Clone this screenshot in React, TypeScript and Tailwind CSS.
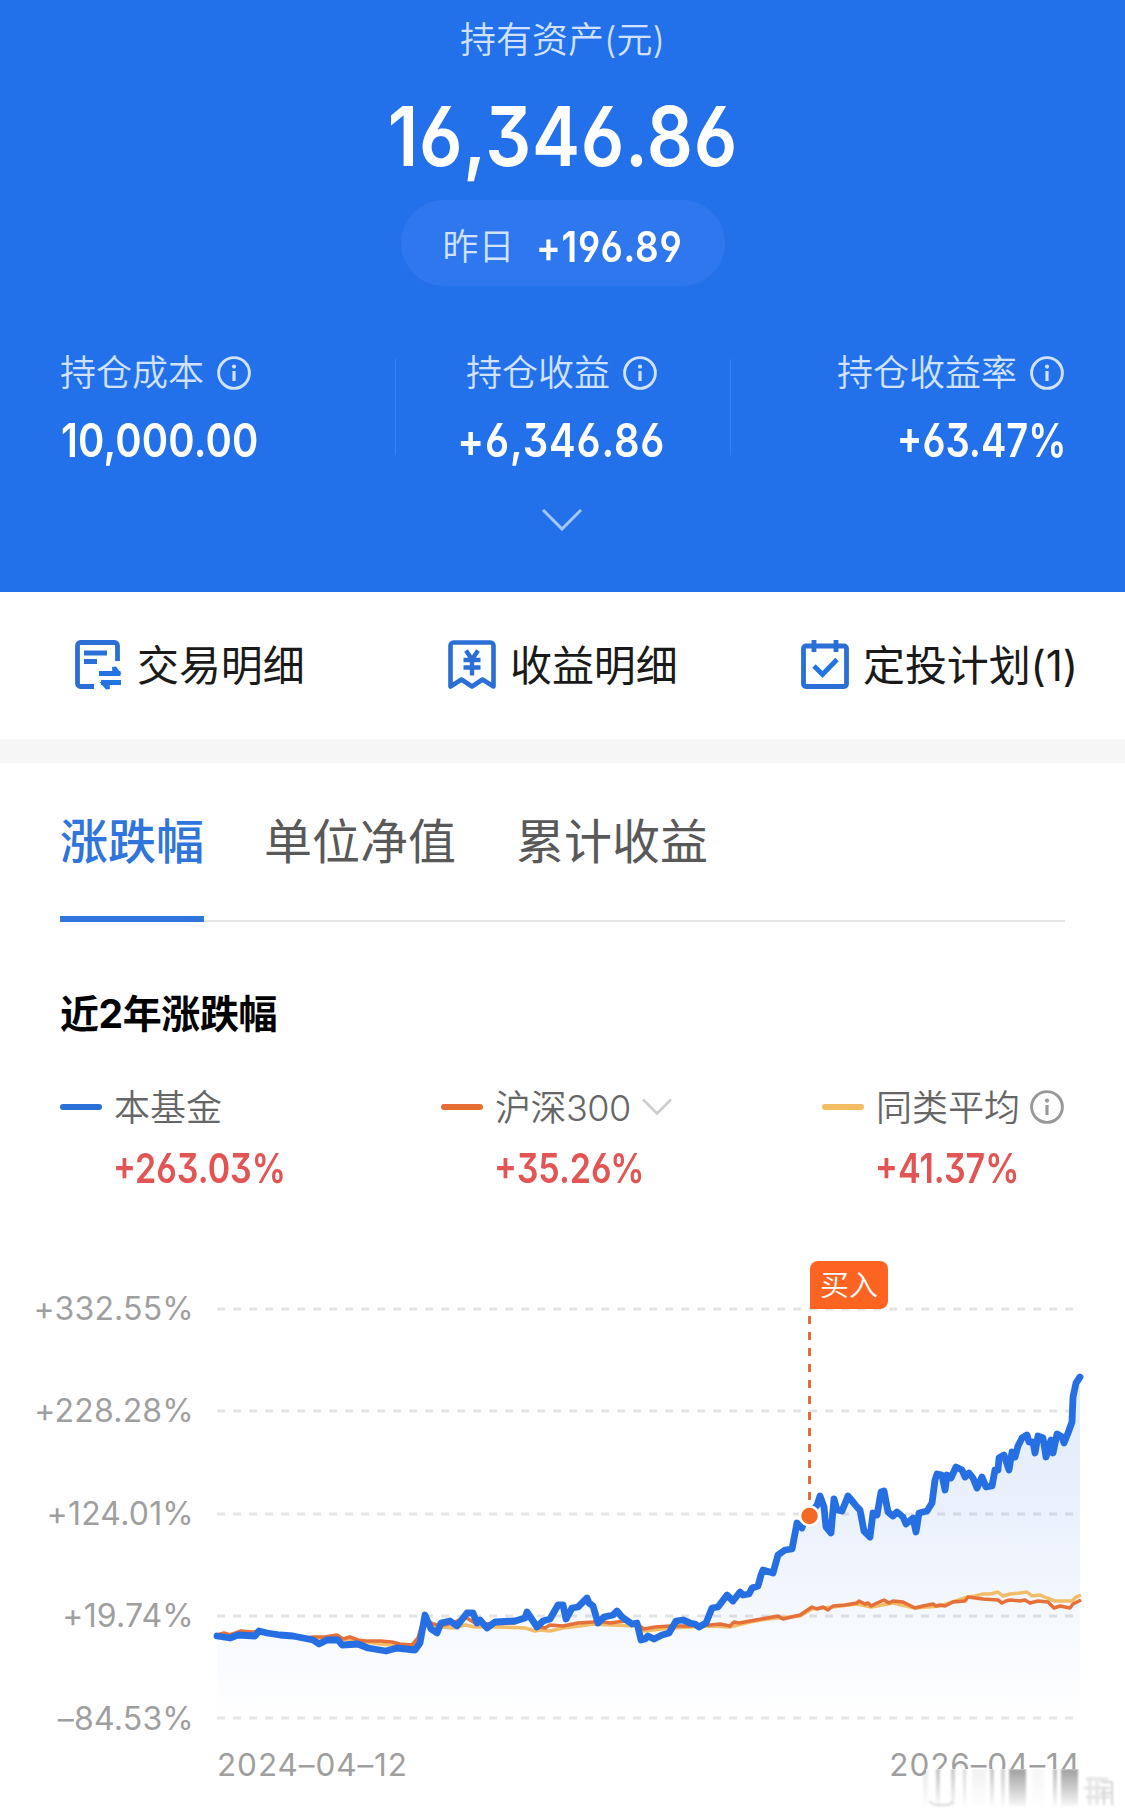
import React from 'react';
import { clsx } from 'clsx';

const ACTIONS = [
  { id: 'trade', label: '交易明细', Icon: TradeIcon, width: 'w-[373px]' },
  { id: 'profit', label: '收益明细', Icon: ProfitIcon, width: 'w-[353px]' },
  { id: 'plan', label: '定投计划(1)', Icon: PlanIcon, width: 'w-[290px]' },
];

const TABS = ['涨跌幅', '单位净值', '累计收益'];

const Y_LABELS = ['+332.55%', '+228.28%', '+124.01%', '+19.74%', '–84.53%'];
const GRID_Y = [69, 171, 274, 376, 478];

// x,y pairs in plot coordinates
const FUND =
  '17,396 30,398 38,395 55,396 59,391 67,393 80,395 93,396 113,400 119,404 127,400 138,400 142,405 158,404 168,408 186,411 197,408 215,410 220,403 225,375 231,389 237,393 241,383 250,381 257,386 267,373 273,373 277,383 280,380 287,388 295,382 315,381 325,378 327,372 337,387 343,381 350,379 358,365 363,365 366,379 372,368 378,367 382,363 387,358 389,363 393,366 398,383 404,377 413,375 417,371 422,377 432,384 437,383 441,400 445,399 448,396 454,399 462,395 469,393 476,381 483,380 490,383 495,384 499,387 506,383 512,368 518,367 527,355 533,361 540,352 543,355 549,354 552,348 558,346 561,335 563,330 573,333 578,315 585,310 592,309 597,283 602,288 604,282 609,276 617,265 620,256 624,267 626,287 631,293 634,259 637,270 642,271 648,256 653,262 657,267 660,270 664,291 670,297 673,273 677,275 681,252 684,251 688,272 693,276 697,272 703,277 706,284 713,278 716,292 719,273 727,271 732,263 735,240 737,234 742,235 745,250 747,235 751,238 756,227 762,230 765,237 769,233 773,238 777,248 782,237 786,247 792,246 795,230 798,230 799,218 804,215 809,230 812,212 815,217 818,206 822,198 827,195 829,202 833,202 835,213 838,196 843,198 846,217 851,200 853,213 857,194 862,197 864,203 868,193 872,182 873,157 876,143 880,137';

const INDEX =
  '17,395 24,393 30,395 41,391 52,392 60,391 80,394 93,395 104,398 113,397 125,397 137,395 143,399 150,397 158,400 165,401 180,401 192,402 200,404 212,405 218,398 225,374 229,382 234,384 240,386 253,383 265,377 275,383 290,384 315,383 329,377 335,386 345,388 350,385 363,386 378,383 393,382 398,381 410,383 425,381 438,385 444,389 455,387 470,386 490,386 510,385 520,384 530,386 534,382 539,383 550,381 567,378 578,376 583,379 600,375 612,367 617,369 623,367 628,370 633,366 645,365 657,363 659,361 665,364 668,363 671,366 677,363 684,360 689,363 693,361 703,362 715,368 723,366 733,364 736,366 740,365 745,366 753,362 765,361 768,357 783,359 798,360 802,363 806,361 810,360 820,361 825,360 830,363 838,361 848,362 854,368 860,366 870,368 873,364 881,360';

const AVERAGE =
  '17,396 41,393 60,393 93,397 113,399 137,398 150,400 180,404 200,406 212,407 218,400 225,377 234,386 240,387 253,388 265,385 275,387 300,387 325,388 335,391 340,390 350,391 363,388 380,386 393,384 410,385 438,386 444,391 470,388 510,386 530,387 550,382 567,379 600,376 612,369 633,367 657,364 671,367 693,363 715,368 740,366 768,357 775,356 783,354 790,354 798,352 803,356 810,354 820,353 827,352 832,356 840,355 847,358 855,361 872,361 876,357 881,355';

function InfoIcon({ className }: { className?: string }) {
  return (
    <svg viewBox="0 0 34 34" fill="none" className={clsx('w-[34px] h-[34px] shrink-0', className)}>
      <circle cx="17" cy="17" r="15.4" stroke="currentColor" strokeWidth="2.9" />
      <circle cx="17" cy="10.6" r="2.1" fill="currentColor" />
      <path d="M17 15v10" stroke="currentColor" strokeWidth="3.2" />
    </svg>
  );
}

function TradeIcon() {
  return (
    <svg viewBox="0 0 48 50" fill="none" className="w-12 h-[50px] shrink-0">
      <path d="M19 46.5H5.5a3 3 0 0 1-3-3v-38a3 3 0 0 1 3-3h34a3 3 0 0 1 3 3V21" stroke="#2b6fd6" strokeWidth="4.8" />
      <path d="M9 13h23M9 21.5h13" stroke="#2b6fd6" strokeWidth="4.8" />
      <path d="M24 33.5h21.5M46 42.5H26" stroke="#2274e5" strokeWidth="4.8" />
      <path d="M37 27l4-0.5 5.5 7.5h-9zM35 49l-4 0.5-6.5-7.5h10z" fill="#2274e5" />
    </svg>
  );
}

function ProfitIcon() {
  return (
    <svg viewBox="0 0 48 50" fill="none" className="w-12 h-[50px] shrink-0">
      <path
        d="M2.5 46.5v-41a3 3 0 0 1 3-3h37a3 3 0 0 1 3 3v41L34.5 39.5 24 46.5 13.5 39.5z"
        stroke="#2b6fd6"
        strokeWidth="4.6"
        strokeLinejoin="round"
      />
      <path d="M18 10.5l6 9 6-9M15.5 20h17M15.5 27.5h17M24 19v16.5" stroke="#2b6fd6" strokeWidth="4.4" />
    </svg>
  );
}

function PlanIcon() {
  return (
    <svg viewBox="0 0 48 50" fill="none" className="w-12 h-[50px] shrink-0">
      <rect x="2.5" y="6" width="43" height="40.5" rx="2.5" stroke="#2b6fd6" strokeWidth="4.8" />
      <path d="M13 0v12M35 0v12" stroke="#2b6fd6" strokeWidth="4.8" />
      <path d="M13 26l8.5 8.5L36 19.5" stroke="#2274e5" strokeWidth="4.8" />
    </svg>
  );
}

function Num({ children, className }: { children: React.ReactNode; className?: string }) {
  return (
    <span className={clsx("font-semibold whitespace-nowrap [font-feature-settings:'cv03','cv04','cv09']", className)}>
      {children}
    </span>
  );
}

function Chart() {
  return (
    <section className="relative h-[556px] flex">
      <div className="w-[194px] shrink-0 pt-[48px] flex flex-col items-end">
        {Y_LABELS.map((label) => (
          <span key={label} className="h-[102.4px] shrink-0 leading-[42px] text-[32px] tracking-[0.2px] text-[#9f9f9f]">
            {label}
          </span>
        ))}
      </div>
      <div className="ml-1.5 w-[925px]">
        <svg viewBox="0 0 925 500" className="w-[925px] h-[500px] block">
          <defs>
            <linearGradient id="fundArea" gradientUnits="userSpaceOnUse" x1="0" y1="137" x2="0" y2="478">
              <stop offset="0" stopColor="#1f66e0" stopOpacity="0.13" />
              <stop offset="0.4" stopColor="#1f66e0" stopOpacity="0.09" />
              <stop offset="1" stopColor="#1f66e0" stopOpacity="0" />
            </linearGradient>
          </defs>
          {GRID_Y.map((y) => (
            <path key={y} d={`M17 ${y}H873`} stroke="#e3e3e3" strokeWidth="3" strokeDasharray="8 8" />
          ))}
          <polygon points={`17,478 ${FUND} 880,478`} fill="url(#fundArea)" />
          <polyline points={AVERAGE} fill="none" stroke="#f2bd67" strokeWidth="3.5" strokeLinejoin="round" />
          <polyline points={INDEX} fill="none" stroke="#e5703a" strokeWidth="3.5" strokeLinejoin="round" />
          <polyline points={FUND} fill="none" stroke="#266fe3" strokeWidth="6.8" strokeLinejoin="round" strokeLinecap="round" />
          <path d="M609.5 76V262" stroke="#e06f34" strokeWidth="3" strokeDasharray="8 8" />
          <circle cx="609.5" cy="276" r="9.5" fill="#f46a24" stroke="#fff" strokeWidth="2.5" />
        </svg>
        <div className="pl-[17px] pr-[44px] h-[50px] flex justify-between text-[31.5px] leading-[50px] tracking-[0.9px] text-[#9f9f9f]">
          <span>2024–04–12</span>
          <span>2026–04–14</span>
        </div>
      </div>
      <div className="absolute left-[810px] top-[21px] w-[78px] h-12 rounded-lg rounded-bl-none bg-[#fd6321] text-white text-[29px] font-[350] leading-[50px] text-center">
        买入
      </div>
      <Watermark />
    </section>
  );
}

// x, width, opacity of each streak
const STREAKS = [
  [3, 5, 0.2], [16, 4, 0.55], [31, 4, 0.5], [43, 3, 0.35], [52, 14, 0.12], [70, 4, 0.5],
  [81, 4, 0.45], [89, 17, 0.85], [112, 12, 0.08], [133, 4, 0.6], [141, 17, 0.85],
];

function Watermark() {
  return (
    <svg viewBox="0 0 200 48" className="absolute left-[920px] top-[529px] w-[200px] h-12">
      <defs>
        <linearGradient id="streak" x1="0" y1="0" x2="0" y2="1">
          <stop offset="0" stopColor="#8f8f8f" />
          <stop offset="1" stopColor="#8f8f8f" stopOpacity="0.08" />
        </linearGradient>
        <filter id="soft" x="-20%" y="-20%" width="140%" height="140%">
          <feGaussianBlur stdDeviation="0.9" />
        </filter>
      </defs>
      <rect x="6" y="0" width="160" height="38" fill="#fff" />
      <g filter="url(#soft)">
        {STREAKS.map(([x, w, o]) => (
          <rect key={x} x={x} y="0" width={w} height="37" fill="url(#streak)" opacity={o} />
        ))}
        <path d="M10 32q2 4 8 4h7q6 0 8-4" fill="none" stroke="#ccc" strokeWidth="1.5" />
        <path d="M166 10h22M164 19h26M166 28h24M170 8v28M177 12v24" stroke="#e4e4e4" strokeWidth="3" />
        <path d="M181 13h12M180 24h13M184 18v18M192 14v22" stroke="#d6d6d6" strokeWidth="2" />
      </g>
    </svg>
  );
}

export default function App() {
  return (
    <div className="w-[1125px] h-[1817px] overflow-hidden bg-white font-['Inter','Noto_Sans_CJK_SC',sans-serif]">
      <header className="h-[592px] bg-[#2370eb] flex flex-col items-center">
        <div className="mt-[13px] h-[54px] leading-[54px] text-[36px] font-[350] text-[#d0e2ff]">持有资产(元)</div>
        <Num className="mt-[20px] h-[100px] leading-[100px] text-[82px] tracking-[0.8px] text-white origin-center scale-x-[.88]">16,346.86</Num>
        <div className="mt-[13px] w-[324px] h-[86px] rounded-full bg-[#2f77ee] flex items-center pl-[42px]">
          <span className="mt-2 text-[36px] font-[350] text-[#d0e2ff]">昨日</span>
          <Num className="ml-[21px] mt-1.5 text-[42px] tracking-[0.8px] text-white origin-left scale-x-[.88]">+196.89</Num>
        </div>

        <div className="mt-[55px] w-full px-[60px] flex justify-between">
          <div className="w-[335px]">
            <div className="pt-px h-[62px] flex items-center text-[36px] font-[350] text-[#d0e2ff]">
              持仓成本<InfoIcon className="ml-[13px]" />
            </div>
            <Num className="block mt-[5px] ml-px leading-[64px] text-[47px] tracking-[0.2px] text-white origin-left scale-x-[.85]">10,000.00</Num>
          </div>
          <div className="mt-[18px] w-px h-[96px] bg-[#3a80f2]" />
          <div className="w-[334px] pr-[3px] flex flex-col items-center">
            <div className="pt-px h-[62px] flex items-center text-[36px] font-[350] text-[#d0e2ff]">
              持仓收益<InfoIcon className="ml-[13px]" />
            </div>
            <Num className="block mt-[5px] leading-[64px] text-[47px] tracking-[1px] text-white origin-center scale-x-[.85]">+6,346.86</Num>
          </div>
          <div className="mt-[18px] w-px h-[96px] bg-[#3a80f2]" />
          <div className="w-[334px] flex flex-col items-end">
            <div className="pt-px pr-px h-[62px] flex items-center text-[36px] font-[350] text-[#d0e2ff]">
              持仓收益率<InfoIcon className="ml-[13px]" />
            </div>
            <Num className="block mt-[5px] -mr-0.5 leading-[64px] text-[47px] text-white origin-right scale-x-[.81]">+63.47%</Num>
          </div>
        </div>

        <svg viewBox="0 0 40 22" fill="none" className="mt-[37px] mr-0.5 w-10 h-[22px]">
          <path d="M1 1l19 19L39 1" stroke="#a3c8fb" strokeWidth="3" />
        </svg>
      </header>

      <nav className="h-[147px] pb-px flex items-center pl-[75px] text-[42px] text-[#1a1a1a]">
        {ACTIONS.map(({ id, label, Icon, width }) => (
          <button key={id} type="button" className={clsx('flex items-center gap-[14px] whitespace-nowrap tracking-[-0.1px]', width)}>
            <Icon />
            <span>{label}</span>
          </button>
        ))}
      </nav>

      <div className="h-6 bg-[#f6f6f6]" />

      <div className="mx-[60px] h-[159px] border-b-2 border-[#e5e5e5] flex gap-[60px] text-[48px]">
        {TABS.map((tab, i) => (
          <button
            key={tab}
            type="button"
            className={clsx('h-[159px] pt-1 whitespace-nowrap border-b-[6px]', i === 0 ? 'text-[#2f75db] font-medium border-[#2f75db]' : 'text-[#595959] border-transparent')}
          >
            {tab}
          </button>
        ))}
      </div>

      <h2 className="mt-[62px] px-[60px] h-[60px] leading-[60px] text-[39px] font-bold tracking-[-0.4px] text-black">近2年涨跌幅</h2>

      <div className="mt-[33px] pl-[60px] pr-[60px] h-[163px] flex text-[36px] font-[350] text-[#666]">
        <div className="w-[381px]">
          <div className="h-[60px] flex items-center">
            <i className="w-[42px] h-1.5 rounded-full bg-[#2b6fd9] mr-[12px]" />
            <span className="pt-0.5">本基金</span>
          </div>
          <Num className="block ml-[53px] leading-[62px] text-[41px] text-[#e15554] origin-left scale-x-[.83]">+263.03%</Num>
        </div>
        <div className="w-[381px]">
          <div className="h-[60px] flex items-center">
            <i className="w-[42px] h-1.5 rounded-full bg-[#e66d33] mr-[12px]" />
            <span className="pt-0.5 tracking-[-0.5px]">沪深300</span>
            <svg viewBox="0 0 30 18" fill="none" className="ml-[11px] w-[30px] h-[18px]">
              <path d="M1 1.5l14 14 14-14" stroke="#ccc" strokeWidth="2.5" />
            </svg>
          </div>
          <Num className="block ml-[53px] leading-[62px] text-[41px] text-[#e15554] origin-left scale-x-[.83]">+35.26%</Num>
        </div>
        <div>
          <div className="h-[60px] flex items-center">
            <i className="w-[42px] h-1.5 rounded-full bg-[#f3bd62] mr-[12px]" />
            <span className="pt-0.5">同类平均</span>
            <InfoIcon className="ml-2.5 text-[#999]" />
          </div>
          <Num className="block ml-[53px] leading-[62px] text-[41px] text-[#e15554] origin-left scale-x-[.83]">+41.37%</Num>
        </div>
      </div>

      <Chart />
    </div>
  );
}
